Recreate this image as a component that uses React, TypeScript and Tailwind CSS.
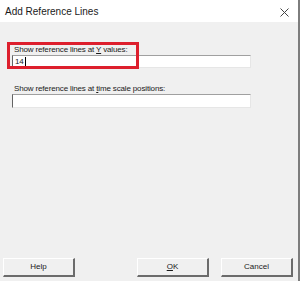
export default function App() {
  return (
    <div
      className="relative w-[300px] h-[281px] flex flex-col bg-[#f0f0f0] border-r-2 border-[#7d7d7d] text-[#1a1a1a] overflow-hidden"
      style={{ fontFamily: '"Liberation Sans", Arial, sans-serif' }}
    >
      {/* title bar */}
      <div className="h-[22px] shrink-0 flex items-center justify-between bg-white pl-[5px] pr-[9px] pt-[2px]">
        <span className="text-[10px] leading-none">Add Reference Lines</span>
        <svg width="9" height="9" viewBox="0 0 9 9" className="text-[#444]">
          <path d="M0.5 0.5 L8.5 8.5 M8.5 0.5 L0.5 8.5" stroke="currentColor" strokeWidth="1" />
        </svg>
      </div>

      {/* body */}
      <div className="flex-1 flex flex-col px-[12px] pt-[23px] text-[8px] leading-[10px] tracking-[-0.15px]">
        <label className="pl-[2px]">
          Show reference lines at <span className="underline">Y</span> values:
        </label>
        <div className="w-[239px] h-[13px] bg-white border-t border-l border-t-[#a0a0a0] border-l-[#646464] border-r border-b border-r-[#e6e6e6] border-b-[#e6e6e6] flex items-center pl-[2px]">
          <span className="leading-none">14</span>
          <span className="w-px h-[9px] bg-black ml-px" />
        </div>

        <label className="pl-[2px] mt-[16px]">
          Show reference lines at <span className="underline">t</span>ime scale positions:
        </label>
        <div className="w-[239px] h-[14px] bg-white border-t border-l border-t-[#a0a0a0] border-l-[#646464] border-r border-b border-r-[#e6e6e6] border-b-[#e6e6e6]" />

        <div className="flex-1" />

        {/* buttons */}
        <div className="flex items-center -ml-[9px] -mr-[7px] mb-[4px] tracking-normal">
          <button className="w-[72px] h-[19px] bg-[#f0f0f0] border-t border-l border-white border-r-2 border-b-2 border-r-[#6b6b6b] border-b-[#6b6b6b]">
            Help
          </button>
          <div className="flex-1" />
          <button className="w-[72px] h-[19px] bg-[#f0f0f0] border-t border-l border-white border-r-2 border-b-2 border-r-[#6b6b6b] border-b-[#6b6b6b]">
            <span className="underline">O</span>K
          </button>
          <button className="ml-[12px] w-[72px] h-[19px] bg-[#f0f0f0] border-t border-l border-white border-r-2 border-b-2 border-r-[#6b6b6b] border-b-[#6b6b6b]">
            Cancel
          </button>
        </div>
      </div>

      {/* red highlight annotation */}
      <div className="absolute left-[7px] top-[42px] w-[132px] h-[27px] border-[3px] border-[#dd1f2d] pointer-events-none" />
    </div>
  );
}
